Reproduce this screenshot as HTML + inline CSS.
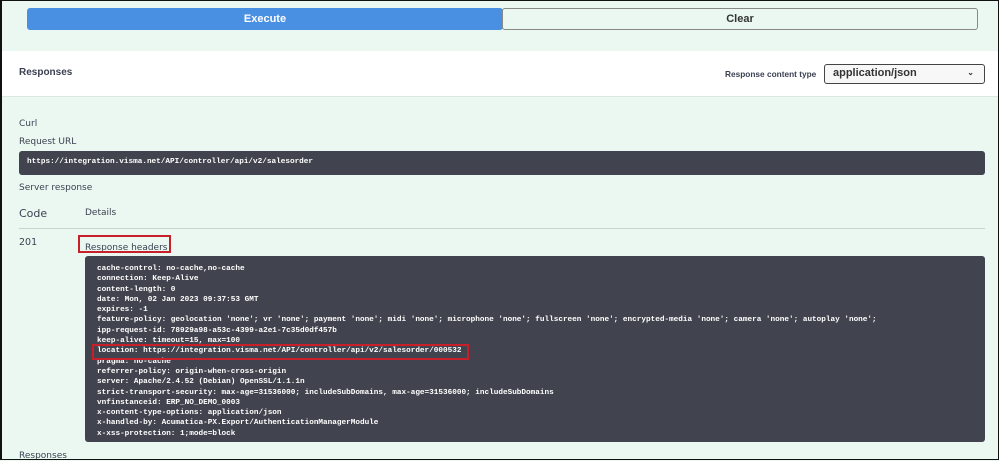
<!DOCTYPE html>
<html><head><meta charset="utf-8"><style>
*{margin:0;padding:0;box-sizing:border-box}
body{width:999px;height:460px;overflow:hidden;background:#ebf8f1;font-family:"Liberation Sans",sans-serif;position:relative}
.frame{position:absolute;left:0;top:0;width:999px;height:460px;border:1px solid #111;border-left-width:2px;pointer-events:none}
.abs{position:absolute}
.btn{position:absolute;top:8px;height:22px;font-size:11px;font-weight:bold;text-align:center;line-height:21px;border-radius:3px}
.mono{font-family:"Liberation Mono",monospace;font-weight:bold;font-size:7.7px;color:#fff}
.lbl{position:absolute;font-size:9px;color:#3b4151;font-family:"DejaVu Sans","Liberation Sans",sans-serif}
</style></head><body>
<div class="btn" style="left:27px;width:476px;background:#4a90e2;color:#fff;border:1px solid #4a90e2">Execute</div>
<div class="btn" style="left:502px;width:476px;background:#ebf8f1;color:#333;border:1px solid #888">Clear</div>
<div class="abs" style="left:2px;top:51px;width:996px;height:46px;background:#fff;border-bottom:1px solid #dde6e1"></div>
<div class="abs" style="left:19px;top:67px;font-size:10px;font-weight:bold;color:#3b4151">Responses</div>
<div class="abs" style="left:725px;top:69px;font-size:8.3px;font-weight:bold;color:#3b4151">Response content type</div>
<div class="abs" style="left:824px;top:64px;width:161px;height:20px;border:1px solid #444;border-radius:3px;background:#f7f7f7;font-size:11px;font-weight:bold;color:#333;padding:2px 0 0 8px">application/json<span style="position:absolute;right:10px;top:3px;font-size:8px">&#8964;</span></div>
<div class="lbl" style="left:19px;top:119px">Curl</div>
<div class="lbl" style="left:19px;top:137px">Request URL</div>
<div class="abs" style="left:19px;top:151px;width:966px;height:24px;background:#41444e;border-radius:3px"></div>
<div class="abs mono" style="left:27px;top:158px">https://integration.visma.net/API/controller/api/v2/salesorder</div>
<div class="lbl" style="left:19px;top:183px">Server response</div>
<div class="abs" style="left:19px;top:207px;font-size:11px;color:#3b4151;font-family:'DejaVu Sans',sans-serif">Code</div>
<div class="lbl" style="left:85px;top:208px">Details</div>
<div class="abs" style="left:19px;top:228px;width:966px;height:1px;background:#c9d3ce"></div>
<div class="lbl" style="left:19px;top:237px;font-size:9.5px">201</div>
<div class="lbl" style="left:85px;top:243px">Response headers</div>
<div class="abs" style="left:78px;top:235px;width:93px;height:18px;border:2px solid #c8202a"></div>
<div class="abs" style="left:85px;top:256px;width:900px;height:186px;background:#41444e;border-radius:3px"></div>
<pre class="abs mono" style="left:97px;top:264px;line-height:10.3px">cache-control: no-cache,no-cache
connection: Keep-Alive
content-length: 0
date: Mon, 02 Jan 2023 09:37:53 GMT
expires: -1
feature-policy: geolocation 'none'; vr 'none'; payment 'none'; midi 'none'; microphone 'none'; fullscreen 'none'; encrypted-media 'none'; camera 'none'; autoplay 'none';
ipp-request-id: 78929a98-a53c-4399-a2e1-7c35d0df457b
keep-alive: timeout=15, max=100
location: https://integration.visma.net/API/controller/api/v2/salesorder/000532
pragma: no-cache
referrer-policy: origin-when-cross-origin
server: Apache/2.4.52 (Debian) OpenSSL/1.1.1n
strict-transport-security: max-age=31536000; includeSubDomains, max-age=31536000; includeSubDomains
vnfinstanceid: ERP_NO_DEMO_0003
x-content-type-options: application/json
x-handled-by: Acumatica-PX.Export/AuthenticationManagerModule
x-xss-protection: 1;mode=block</pre>
<div class="abs" style="left:92px;top:344px;width:377px;height:16px;border:2px solid #c8202a"></div>
<div class="lbl" style="left:19px;top:451px">Responses</div>
<div class="frame"></div>
</body></html>
